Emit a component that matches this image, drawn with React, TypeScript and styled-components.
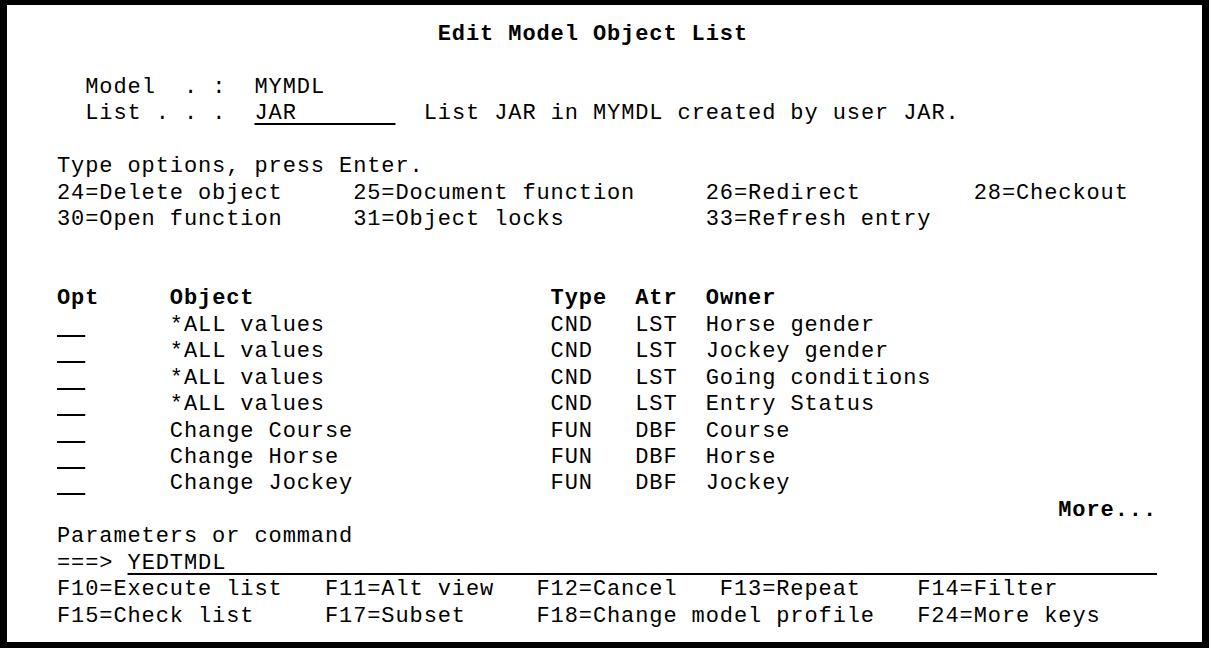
import React from "react";
import styled, { createGlobalStyle } from "styled-components";

const CW = 14.1;
const RH = 26.45;
const FS = 22;

const Global = createGlobalStyle`
  html, body { margin: 0; padding: 0; background: #fff; }
`;

const Screen = styled.main`
  box-sizing: border-box;
  width: 1209px;
  height: 648px;
  border-style: solid;
  border-color: #000;
  border-width: 5px 7px 6px 7px;
  background: #fff;
  padding: 17px 0 0 50px;
  display: flex;
  flex-direction: column;
  font-family: "Liberation Mono", "DejaVu Sans Mono", monospace;
  font-size: ${FS}px;
  letter-spacing: ${CW - FS * 0.6}px;
  color: #000;
`;

const Row = styled.div`
  height: ${RH}px;
  line-height: ${RH}px;
  white-space: pre;
`;

const Strong = styled.span`
  font-weight: bold;
`;

const Input = styled.span`
  text-decoration: underline;
  text-decoration-thickness: 2px;
  text-underline-offset: 4px;
  text-decoration-skip-ink: none;
`;

type Seg = { col: number; text: string; kind?: "bold" | "field"; width?: number };

const L = (...segs: Seg[]) => segs;
const t = (col: number, text: string): Seg => ({ col, text });
const b = (col: number, text: string): Seg => ({ col, text, kind: "bold" });
const f = (col: number, width: number, text = ""): Seg => ({ col, text, kind: "field", width });

const records: [string, string, string, string][] = [
  ["*ALL values", "CND", "LST", "Horse gender"],
  ["*ALL values", "CND", "LST", "Jockey gender"],
  ["*ALL values", "CND", "LST", "Going conditions"],
  ["*ALL values", "CND", "LST", "Entry Status"],
  ["Change Course", "FUN", "DBF", "Course"],
  ["Change Horse", "FUN", "DBF", "Horse"],
  ["Change Jockey", "FUN", "DBF", "Jockey"],
];

const lines: Seg[][] = [
  L(b(27, "Edit Model Object List")),
  L(),
  L(t(2, "Model  . :"), t(14, "MYMDL")),
  L(t(2, "List . . ."), f(14, 10, "JAR"), t(26, "List JAR in MYMDL created by user JAR.")),
  L(),
  L(t(0, "Type options, press Enter.")),
  L(t(0, "24=Delete object"), t(21, "25=Document function"), t(46, "26=Redirect"), t(65, "28=Checkout")),
  L(t(0, "30=Open function"), t(21, "31=Object locks"), t(46, "33=Refresh entry")),
  L(),
  L(),
  L(b(0, "Opt"), b(8, "Object"), b(35, "Type"), b(41, "Atr"), b(46, "Owner")),
  ...records.map(([o, ty, a, ow]) => L(f(0, 2), t(8, o), t(35, ty), t(41, a), t(46, ow))),
  L(b(71, "More...")),
  L(t(0, "Parameters or command")),
  L(t(0, "===>"), f(5, 73, "YEDTMDL")),
  L(t(0, "F10=Execute list"), t(19, "F11=Alt view"), t(34, "F12=Cancel"), t(47, "F13=Repeat"), t(61, "F14=Filter")),
  L(t(0, "F15=Check list"), t(19, "F17=Subset"), t(34, "F18=Change model profile"), t(61, "F24=More keys")),
];

function renderLine(segs: Seg[]) {
  const out: React.ReactNode[] = [];
  let cur = 0;
  segs.forEach((s, i) => {
    if (s.col > cur) out.push(" ".repeat(s.col - cur));
    if (s.kind === "bold") {
      out.push(<Strong key={i}>{s.text}</Strong>);
      cur = s.col + s.text.length;
    } else if (s.kind === "field") {
      const w = s.width ?? s.text.length;
      out.push(<Input key={i}>{s.text + "\u00a0".repeat(Math.max(0, w - s.text.length))}</Input>);
      cur = s.col + w;
    } else {
      out.push(s.text);
      cur = s.col + s.text.length;
    }
  });
  if (out.length === 0) out.push(" ");
  return out;
}

export default function App() {
  return (
    <>
      <Global />
      <Screen>
        {lines.map((segs, i) => (
          <Row key={i}>{renderLine(segs)}</Row>
        ))}
      </Screen>
    </>
  );
}
